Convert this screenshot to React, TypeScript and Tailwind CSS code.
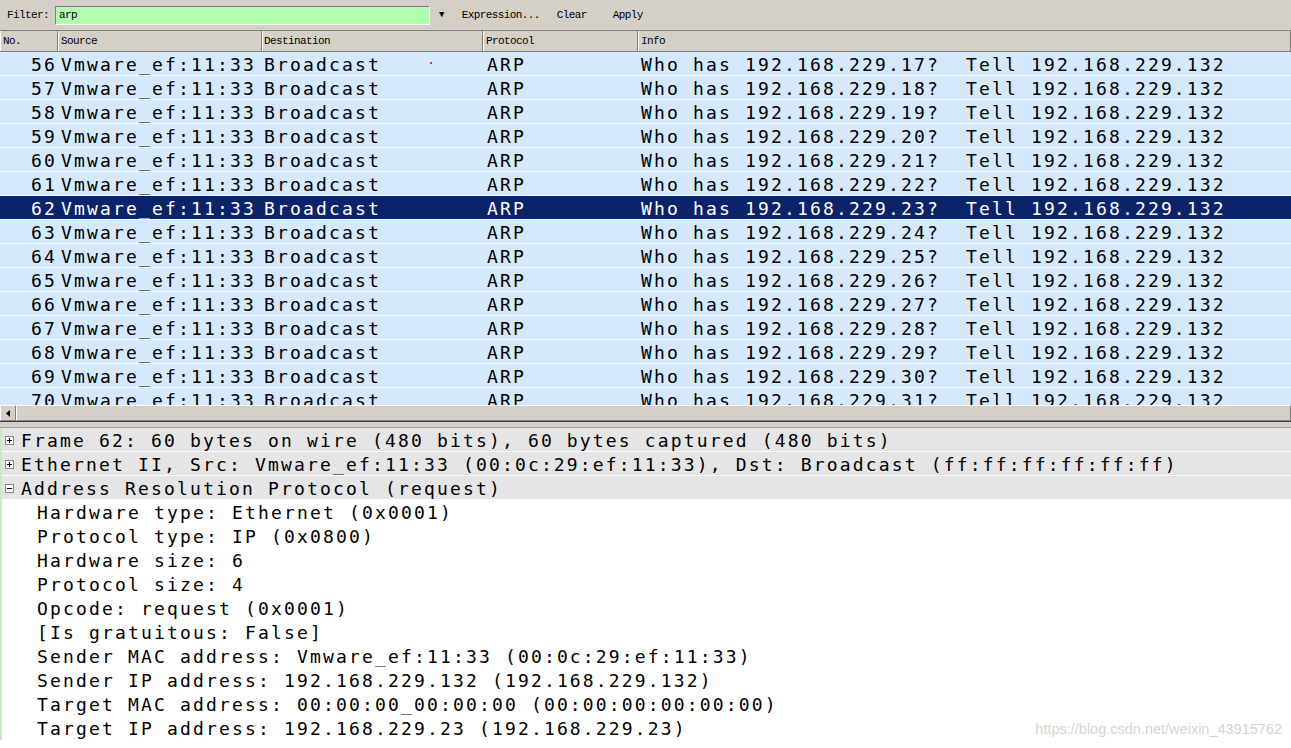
import React from 'react';

const mono = { fontFamily: '"DejaVu Sans Mono", monospace' };

const packets = Array.from({ length: 15 }, (_, i) => ({
  no: 56 + i,
  ip: `192.168.229.${17 + i}`,
}));

const details: { text: string; level: 0 | 1; open?: boolean }[] = [
  { text: 'Frame 62: 60 bytes on wire (480 bits), 60 bytes captured (480 bits)', level: 0, open: false },
  {
    text: 'Ethernet II, Src: Vmware_ef:11:33 (00:0c:29:ef:11:33), Dst: Broadcast (ff:ff:ff:ff:ff:ff)',
    level: 0,
    open: false,
  },
  { text: 'Address Resolution Protocol (request)', level: 0, open: true },
  { text: 'Hardware type: Ethernet (0x0001)', level: 1 },
  { text: 'Protocol type: IP (0x0800)', level: 1 },
  { text: 'Hardware size: 6', level: 1 },
  { text: 'Protocol size: 4', level: 1 },
  { text: 'Opcode: request (0x0001)', level: 1 },
  { text: '[Is gratuitous: False]', level: 1 },
  { text: 'Sender MAC address: Vmware_ef:11:33 (00:0c:29:ef:11:33)', level: 1 },
  { text: 'Sender IP address: 192.168.229.132 (192.168.229.132)', level: 1 },
  { text: 'Target MAC address: 00:00:00_00:00:00 (00:00:00:00:00:00)', level: 1 },
  { text: 'Target IP address: 192.168.229.23 (192.168.229.23)', level: 1 },
];

function ExpandBox({ open }: { open: boolean }) {
  return (
    <svg width="9" height="9" viewBox="0 0 9 9" className="shrink-0">
      <rect x="0.5" y="0.5" width="8" height="8" fill="#fff" stroke="#8a8a8a" />
      <line x1="2" y1="4.5" x2="7" y2="4.5" stroke="#000" />
      {!open && <line x1="4.5" y1="2" x2="4.5" y2="7" stroke="#000" />}
    </svg>
  );
}

function HeaderCell({ label, className }: { label: string; className: string }) {
  return (
    <div className={`h-full flex items-center border-r border-r-[#808080] shadow-[inset_1px_0_0_#ffffff] ${className}`}>
      <span>{label}</span>
    </div>
  );
}

export default function App() {
  const small = { fontFamily: '"Liberation Mono", monospace' };

  return (
    <div className="relative w-[1291px] h-[748px] overflow-hidden bg-white text-black">
      {/* filter toolbar */}
      <div
        className="h-[31px] bg-[#d4d0c8] flex items-center text-[11px] tracking-[-0.6px] border-b border-[#808080] pt-[1px]"
        style={small}
      >
        <span className="ml-[7px]">Filter:</span>
        <div className="ml-[6px] w-[375px] h-[19px] bg-[#afffaf] border border-t-[#808080] border-l-[#808080] border-b-white border-r-white flex items-center pl-[3px]">
          arp
        </div>
        <span className="ml-[9px] text-[9px]">▼</span>
        <span className="ml-[18px]">Expression...</span>
        <span className="ml-[17px]">Clear</span>
        <span className="ml-[26px]">Apply</span>
      </div>

      {/* column headers */}
      <div
        className="h-[21px] bg-[#d4d0c8] flex text-[11px] tracking-[-0.6px] border-b border-[#808080]"
        style={small}
      >
        <HeaderCell label="No." className="w-[58px] pl-[3px]" />
        <HeaderCell label="Source" className="w-[204px] pl-[3px]" />
        <HeaderCell label="Destination" className="w-[221px] pl-[2px]" />
        <HeaderCell label="Protocol" className="w-[155px] pl-[3px]" />
        <HeaderCell label="Info" className="flex-1 pl-[3px]" />
      </div>

      {/* packet list */}
      <div className="relative h-[353px] overflow-hidden text-[18px] tracking-[2.16px]" style={mono}>
        {packets.map((p) => {
          const sel = p.no === 62;
          return (
            <div
              key={p.no}
              className={`h-[24px] flex items-center pt-[1px] border-b border-white whitespace-pre ${
                sel ? 'bg-[#0a246a] text-white' : 'bg-[#d6e8fc]'
              }`}
            >
              <div className="w-[58px] text-right pr-[1px]">{p.no}</div>
              <div className="w-[204px] pl-[3px]">Vmware_ef:11:33</div>
              <div className="w-[221px] pl-[2px]">Broadcast</div>
              <div className="w-[155px] pl-[4px]">ARP</div>
              <div className="flex-1 pl-[3px]">{`Who has ${p.ip}?  Tell 192.168.229.132`}</div>
            </div>
          );
        })}
        <span className="absolute left-[430px] top-[10px] w-[2px] h-[2px] bg-[#ff2020]" />
      </div>

      {/* horizontal scrollbar */}
      <div className="h-[16px] flex bg-[#d4d0c8]">
        <div className="w-[16px] h-full flex items-center justify-center border border-t-white border-l-white border-r-[#808080] border-b-[#808080]">
          <svg width="4" height="7" viewBox="0 0 4 7">
            <path d="M4 0 L0 3.5 L4 7 Z" fill="#000" />
          </svg>
        </div>
        <div className="flex-1 h-full border border-t-white border-l-white border-r-[#808080] border-b-[#808080]" />
      </div>

      {/* splitter */}
      <div className="h-[1px] bg-[#404040]" />
      <div className="h-[5px] bg-[#d4d0c8]" />
      <div className="h-[1px] bg-[#a0a0a0]" />

      {/* packet details */}
      <div className="text-[18px] tracking-[2.16px] border-l-2 border-[#c8ecc0]" style={mono}>
        {details.map((d, i) =>
          d.level === 0 ? (
            <div
              key={i}
              className="h-[24px] flex items-center pt-[1px] bg-[#e5e5e5] border-b border-white whitespace-pre"
            >
              <div className="w-[19px] pl-[3px] flex items-center">
                <ExpandBox open={!!d.open} />
              </div>
              <span>{d.text}</span>
            </div>
          ) : (
            <div key={i} className="h-[24px] flex items-center pt-[1px] pl-[35px] whitespace-pre">
              {d.text}
            </div>
          ),
        )}
      </div>

      {/* watermark */}
      <div
        className="absolute right-[9px] top-[719px] text-[14.5px] text-[#d4d4d4]"
        style={{ fontFamily: '"Liberation Sans", Arial, sans-serif' }}
      >
        https://blog.csdn.net/weixin_43915762
      </div>
    </div>
  );
}
